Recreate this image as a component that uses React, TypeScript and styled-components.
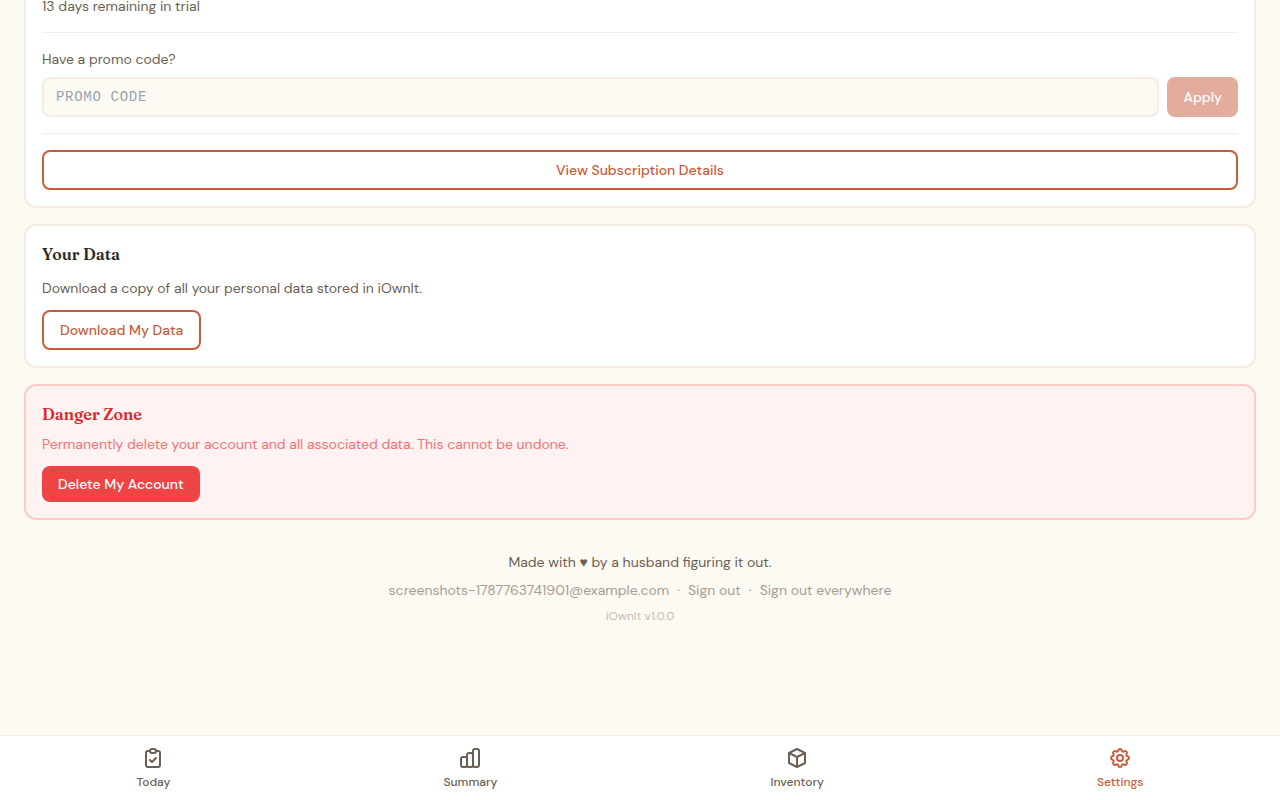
import React, { useState } from 'react';
import styled, { createGlobalStyle, css } from 'styled-components';

const color = {
  cream: '#fdfaf3',
  line: '#f5ebe0',
  frame: '#f5ede4',
  terracotta: '#c65d3b',
  ink: '#2d2a26',
  muted: '#6b5f54',
};

const GlobalStyle = createGlobalStyle`
  *, *::before, *::after { box-sizing: border-box; }
  body {
    margin: 0;
    background: ${color.cream};
    color: ${color.ink};
    font-family: "DM Sans", "Open Sans", sans-serif;
    font-size: 14px;
    line-height: 20px;
  }
  h2, p { margin: 0; }
  button, input { font: inherit; }
`;

const Shell = styled.div`
  display: flex;
  flex-direction: column;
  min-height: 100vh;
`;

const Main = styled.main`
  flex: 1;
  display: flex;
  flex-direction: column;
  gap: 16px;
  padding: 0 24px;
`;

const Card = styled.section<{ $tone?: 'danger'; $scrolled?: boolean }>`
  background: ${p => (p.$tone ? '#fef2f2' : '#ffffff')};
  border: 2px solid ${p => (p.$tone ? '#fecaca' : color.frame)};
  border-radius: 12px;
  padding: 16px;
  ${p => p.$scrolled && css`margin-top: -22px;`}
`;

const CardTitle = styled.h2<{ $tone?: 'danger' }>`
  font-family: Fraunces, "Liberation Serif", serif;
  font-size: 16px;
  font-weight: 600;
  line-height: 24px;
  margin-bottom: ${p => (p.$tone ? 8 : 12)}px;
  color: ${p => (p.$tone ? '#dc2626' : color.ink)};
`;

const Text = styled.p<{ $tone?: 'danger' }>`
  color: ${p => (p.$tone ? '#f87171' : color.muted)};
`;

const Spaced = styled(Text)`
  margin-bottom: 12px;
`;

const Divided = styled.div`
  margin-top: 16px;
  padding-top: 16px;
  border-top: 1px solid ${color.line};
`;

const Label = styled.label`
  display: block;
  margin-bottom: 8px;
  color: ${color.muted};
`;

const PromoRow = styled.form`
  display: flex;
  gap: 8px;
`;

const PromoInput = styled.input`
  flex: 1;
  min-width: 0;
  height: 40px;
  padding: 8px 12px;
  border: 2px solid ${color.frame};
  border-radius: 8px;
  background: ${color.cream};
  color: ${color.ink};
  font-family: "Liberation Mono", monospace;
  letter-spacing: 0.05em;
  text-transform: uppercase;
  &::placeholder { color: #9ca3af; opacity: 1; }
`;

const Button = styled.button<{ $kind: 'solid' | 'outline' | 'danger'; $wide?: boolean }>`
  padding: 8px 16px;
  border-radius: 8px;
  font-weight: 500;
  cursor: pointer;
  ${p => p.$wide && css`width: 100%;`}
  ${p => p.$kind === 'outline' && css`
    border: 2px solid ${color.terracotta};
    background: transparent;
    color: ${color.terracotta};
  `}
  ${p => p.$kind === 'solid' && css`
    border: 0;
    background: ${color.terracotta};
    color: #ffffff;
  `}
  ${p => p.$kind === 'danger' && css`
    border: 0;
    background: #ef4444;
    color: #ffffff;
  `}
  &:disabled { opacity: 0.5; cursor: default; }
`;

const Footer = styled.footer`
  display: flex;
  flex-direction: column;
  align-items: center;
  gap: 8px;
  padding: 16px 0;
  text-align: center;
  color: ${color.muted};
`;

const Account = styled.div`
  display: flex;
  flex-wrap: wrap;
  justify-content: center;
  gap: 0 8px;
  opacity: 0.6;
`;

const LinkButton = styled.button`
  padding: 0;
  border: 0;
  background: none;
  color: inherit;
  cursor: pointer;
`;

const Version = styled.p`
  font-size: 12px;
  line-height: 16px;
  opacity: 0.4;
`;

const Nav = styled.nav`
  position: sticky;
  bottom: 0;
  display: flex;
  justify-content: space-around;
  align-items: center;
  padding: 10px 0;
  background: #ffffff;
  border-top: 1px solid ${color.line};
`;

const NavLink = styled.a<{ $active?: boolean }>`
  display: flex;
  flex-direction: column;
  align-items: center;
  gap: 4px;
  padding: 0 12px;
  font-size: 12px;
  font-weight: 500;
  line-height: 16px;
  text-decoration: none;
  color: ${p => (p.$active ? color.terracotta : color.muted)};
  svg { width: 24px; height: 24px; }
`;

const tabs = [
  {
    label: 'Today',
    paths: ['M9 5H7a2 2 0 00-2 2v12a2 2 0 002 2h10a2 2 0 002-2V7a2 2 0 00-2-2h-2M9 5a2 2 0 002 2h2a2 2 0 002-2M9 5a2 2 0 012-2h2a2 2 0 012 2m-6 9l2 2 4-4'],
  },
  {
    label: 'Summary',
    paths: ['M9 19v-6a2 2 0 00-2-2H5a2 2 0 00-2 2v6a2 2 0 002 2h2a2 2 0 002-2zm0 0V9a2 2 0 012-2h2a2 2 0 012 2v10m-6 0a2 2 0 002 2h2a2 2 0 002-2m0 0V5a2 2 0 012-2h2a2 2 0 012 2v14a2 2 0 01-2 2h-2a2 2 0 01-2-2z'],
  },
  {
    label: 'Inventory',
    paths: ['M20 7l-8-4-8 4m16 0l-8 4m8-4v10l-8 4m0-10L4 7m8 4v10M4 7v10l8 4'],
  },
  {
    label: 'Settings',
    paths: [
      'M10.325 4.317c.426-1.756 2.924-1.756 3.35 0a1.724 1.724 0 002.573 1.066c1.543-.94 3.31.826 2.37 2.37a1.724 1.724 0 001.065 2.572c1.756.426 1.756 2.924 0 3.35a1.724 1.724 0 00-1.066 2.573c.94 1.543-.826 3.31-2.37 2.37a1.724 1.724 0 00-2.572 1.065c-.426 1.756-2.924 1.756-3.35 0a1.724 1.724 0 00-2.573-1.066c-1.543.94-3.31-.826-2.37-2.37a1.724 1.724 0 00-1.065-2.572c-1.756-.426-1.756-2.924 0-3.35a1.724 1.724 0 001.066-2.573c-.94-1.543.826-3.31 2.37-2.37.996.608 2.296.07 2.572-1.065z',
      'M15 12a3 3 0 11-6 0 3 3 0 016 0z',
    ],
  },
];

function Icon({ paths }: { paths: string[] }) {
  return (
    <svg viewBox="0 0 24 24" fill="none" stroke="currentColor" strokeWidth={2} strokeLinecap="round" strokeLinejoin="round" aria-hidden="true">
      {paths.map(d => <path key={d} d={d} />)}
    </svg>
  );
}

export default function App() {
  const [code, setCode] = useState('');
  return (
    <Shell>
      <GlobalStyle />
      <Main>
        <Card $scrolled>
          <Text>13 days remaining in trial</Text>
          <Divided>
            <Label htmlFor="promo">Have a promo code?</Label>
            <PromoRow onSubmit={e => e.preventDefault()}>
              <PromoInput id="promo" placeholder="Promo code" value={code} onChange={e => setCode(e.target.value)} />
              <Button $kind="solid" type="submit" disabled={!code}>Apply</Button>
            </PromoRow>
          </Divided>
          <Divided>
            <Button $kind="outline" $wide type="button">View Subscription Details</Button>
          </Divided>
        </Card>
        <Card>
          <CardTitle>Your Data</CardTitle>
          <Spaced>Download a copy of all your personal data stored in iOwnIt.</Spaced>
          <Button $kind="outline" type="button">Download My Data</Button>
        </Card>
        <Card $tone="danger">
          <CardTitle $tone="danger">Danger Zone</CardTitle>
          <Spaced $tone="danger">Permanently delete your account and all associated data. This cannot be undone.</Spaced>
          <Button $kind="danger" type="button">Delete My Account</Button>
        </Card>
        <Footer>
          <p>Made with ♥ by a husband figuring it out.</p>
          <Account>
            <span>screenshots-1787763741901@example.com</span>
            <span>·</span>
            <LinkButton type="button">Sign out</LinkButton>
            <span>·</span>
            <LinkButton type="button">Sign out everywhere</LinkButton>
          </Account>
          <Version>iOwnIt v1.0.0</Version>
        </Footer>
      </Main>
      <Nav aria-label="Main">
        {tabs.map(t => (
          <NavLink key={t.label} href={`#${t.label.toLowerCase()}`} $active={t.label === 'Settings'}>
            <Icon paths={t.paths} />
            {t.label}
          </NavLink>
        ))}
      </Nav>
    </Shell>
  );
}
